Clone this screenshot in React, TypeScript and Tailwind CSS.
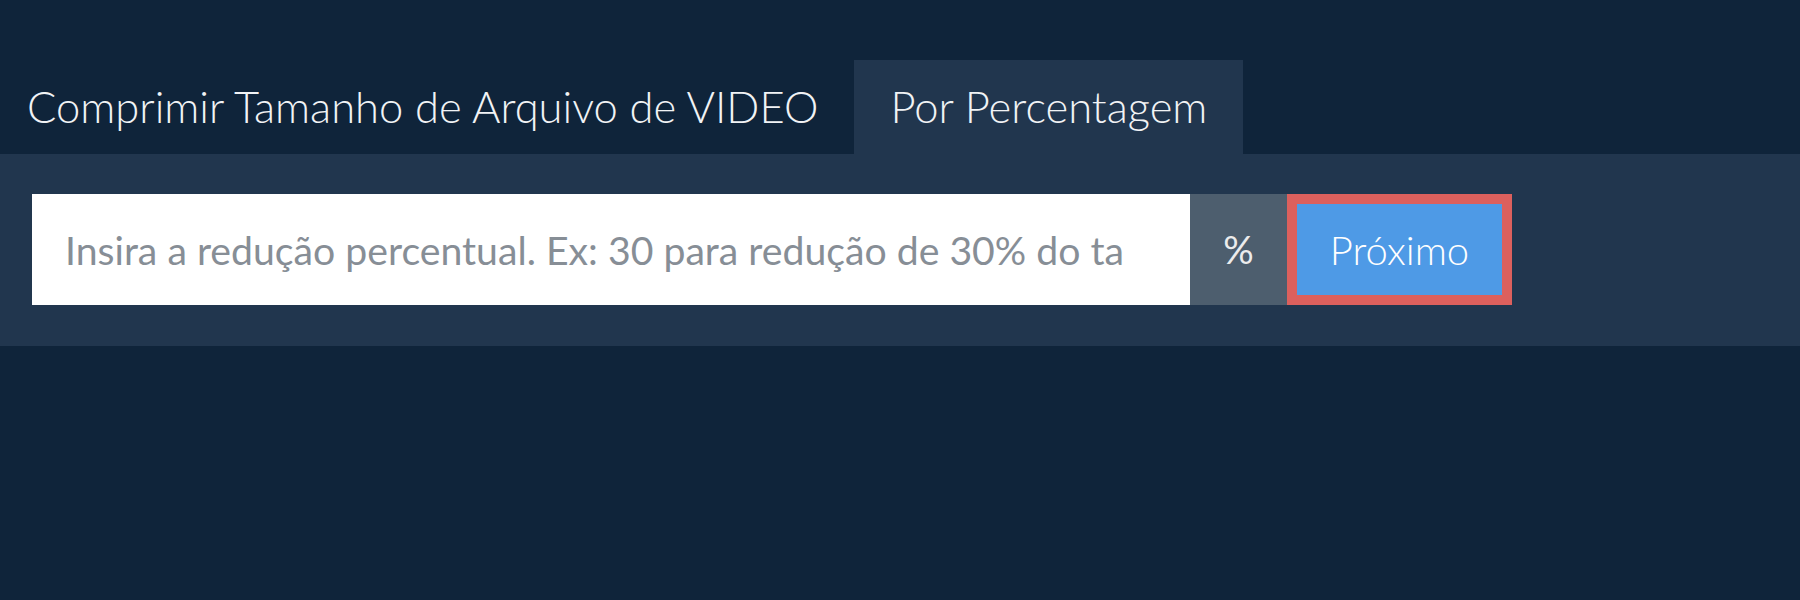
import React from "react";

const App = () => {
  return (
    <div className="w-[1800px] h-[600px] bg-[#0f243a] pt-[60px] font-['Lato','Open_Sans',sans-serif]">
      <div className="flex h-[94px]">
        <div className="flex items-center pl-[27px] pr-[36px] text-[43.5px] font-light text-[#f1f3f5]">
          Comprimir Tamanho de Arquivo de VIDEO
        </div>
        <div className="flex items-center px-[36px] bg-[#21364e] text-[43.5px] font-light text-[#f1f3f5]">
          Por Percentagem
        </div>
      </div>
      <div className="bg-[#21364e] px-[32px] pt-[40px] pb-[41px]">
        <div className="flex h-[111px]">
          <input
            className="w-[1158px] h-full bg-white pl-[33px] pr-[66px] text-[39.2px] text-[#555] placeholder:text-[#878e96] outline-none"
            placeholder="Insira a redução percentual. Ex: 30 para redução de 30% do tamanho"
          />
          <div className="w-[97px] flex items-center justify-center bg-[#4d5e6e] text-[38px] text-[#ececec]">
            %
          </div>
          <button className="w-[225px] bg-[#4e9ae6] border-[10px] border-[#dc605d] text-[40px] font-light text-white">
            Próximo
          </button>
        </div>
      </div>
    </div>
  );
};

export default App;
